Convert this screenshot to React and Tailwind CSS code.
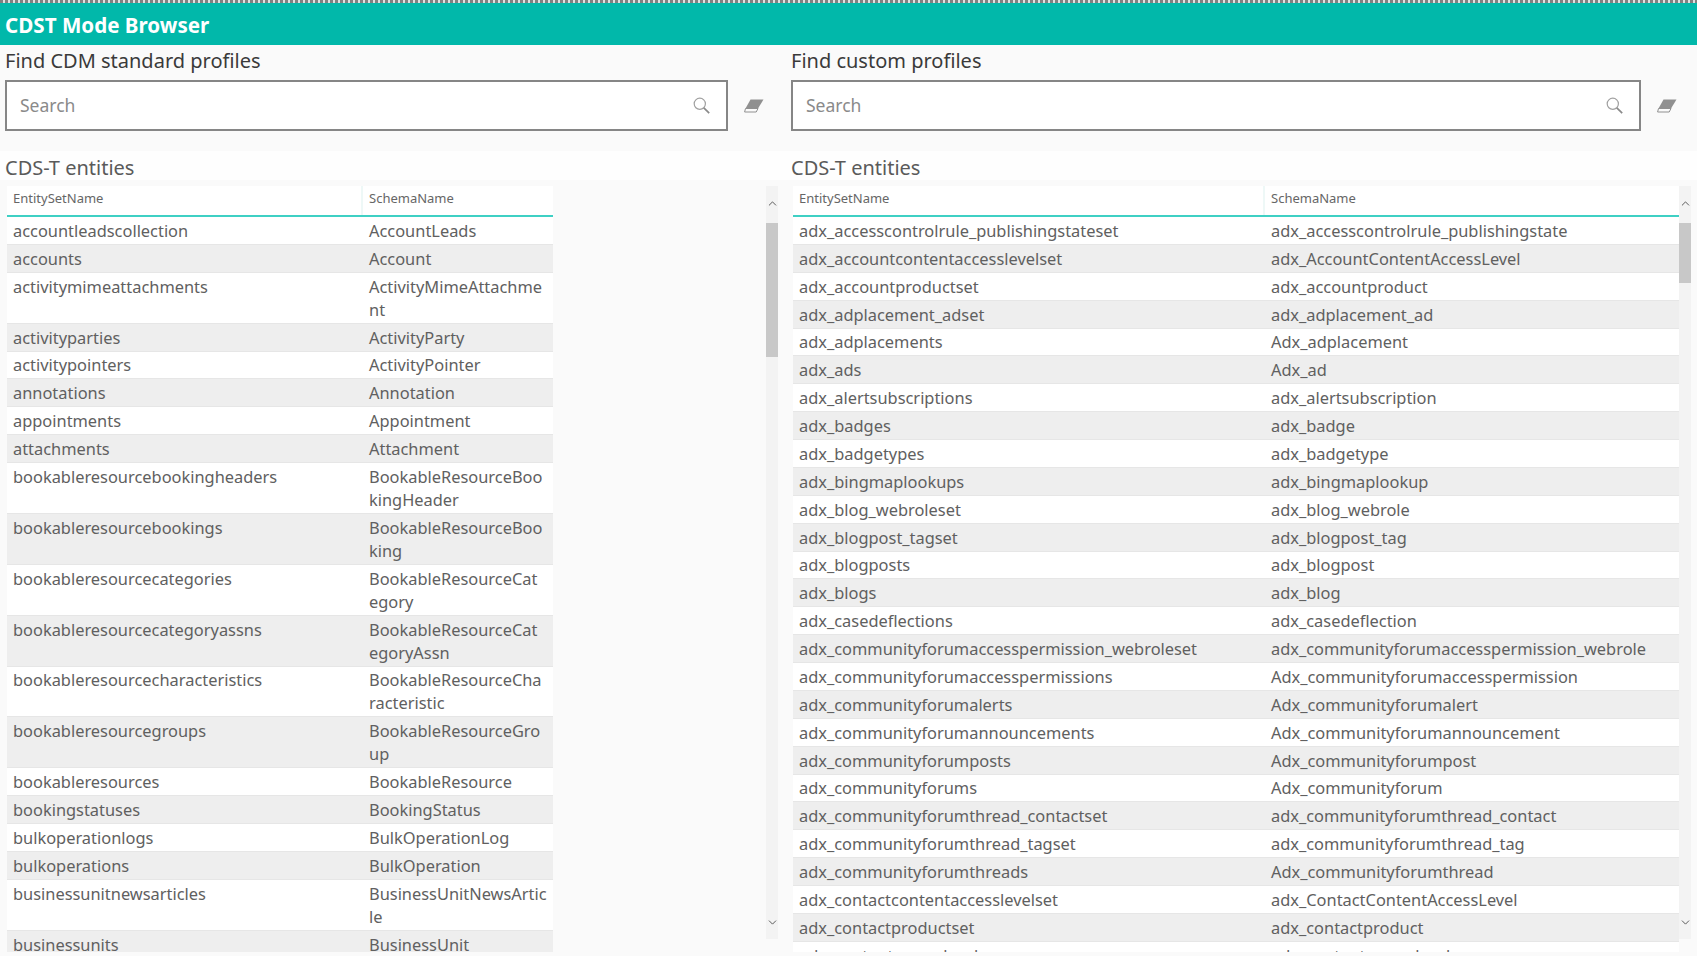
import React from "react";
import { ChevronUp, ChevronDown } from "lucide-react";

const leftRows = [
  ["accountleadscollection", "AccountLeads"],
  ["accounts", "Account"],
  ["activitymimeattachments", "ActivityMimeAttachme\nnt"],
  ["activityparties", "ActivityParty"],
  ["activitypointers", "ActivityPointer"],
  ["annotations", "Annotation"],
  ["appointments", "Appointment"],
  ["attachments", "Attachment"],
  ["bookableresourcebookingheaders", "BookableResourceBoo\nkingHeader"],
  ["bookableresourcebookings", "BookableResourceBoo\nking"],
  ["bookableresourcecategories", "BookableResourceCat\negory"],
  ["bookableresourcecategoryassns", "BookableResourceCat\negoryAssn"],
  ["bookableresourcecharacteristics", "BookableResourceCha\nracteristic"],
  ["bookableresourcegroups", "BookableResourceGro\nup"],
  ["bookableresources", "BookableResource"],
  ["bookingstatuses", "BookingStatus"],
  ["bulkoperationlogs", "BulkOperationLog"],
  ["bulkoperations", "BulkOperation"],
  ["businessunitnewsarticles", "BusinessUnitNewsArtic\nle"],
  ["businessunits", "BusinessUnit"],
];

const rightRows = [
  ["adx_accesscontrolrule_publishingstateset", "adx_accesscontrolrule_publishingstate"],
  ["adx_accountcontentaccesslevelset", "adx_AccountContentAccessLevel"],
  ["adx_accountproductset", "adx_accountproduct"],
  ["adx_adplacement_adset", "adx_adplacement_ad"],
  ["adx_adplacements", "Adx_adplacement"],
  ["adx_ads", "Adx_ad"],
  ["adx_alertsubscriptions", "adx_alertsubscription"],
  ["adx_badges", "adx_badge"],
  ["adx_badgetypes", "adx_badgetype"],
  ["adx_bingmaplookups", "adx_bingmaplookup"],
  ["adx_blog_webroleset", "adx_blog_webrole"],
  ["adx_blogpost_tagset", "adx_blogpost_tag"],
  ["adx_blogposts", "adx_blogpost"],
  ["adx_blogs", "adx_blog"],
  ["adx_casedeflections", "adx_casedeflection"],
  ["adx_communityforumaccesspermission_webroleset", "adx_communityforumaccesspermission_webrole"],
  ["adx_communityforumaccesspermissions", "Adx_communityforumaccesspermission"],
  ["adx_communityforumalerts", "Adx_communityforumalert"],
  ["adx_communityforumannouncements", "Adx_communityforumannouncement"],
  ["adx_communityforumposts", "Adx_communityforumpost"],
  ["adx_communityforums", "Adx_communityforum"],
  ["adx_communityforumthread_contactset", "adx_communityforumthread_contact"],
  ["adx_communityforumthread_tagset", "adx_communityforumthread_tag"],
  ["adx_communityforumthreads", "Adx_communityforumthread"],
  ["adx_contactcontentaccesslevelset", "adx_ContactContentAccessLevel"],
  ["adx_contactproductset", "adx_contactproduct"],
  ["adx_contentaccesslevels", "adx_contentaccesslevel"],
];

const Eraser = () => (
  <svg width="20" height="14" viewBox="0 0 20 14" className="text-[#909090]">
    <path d="M6.5 .5h13l-5.5 9H1.5z" fill="currentColor" />
    <path d="M1.5 9.5h12.5l-1.8 3.5H.6z" fill="#fafafa" stroke="currentColor" strokeWidth="1" />
  </svg>
);

const SearchGlyph = () => (
  <svg width="17" height="17" viewBox="0 0 17 17" fill="none" stroke="#a0a0a0" className="shrink-0">
    <circle cx="6.8" cy="6.8" r="5.6" strokeWidth="1.2" />
    <path d="M10.8 10.8l5.4 5.4" strokeWidth="1.7" stroke="#8a8a8a" />
  </svg>
);

const SearchBox = ({ width }) => (
  <div className={`${width} h-[51px] flex items-center justify-between border-2 border-[#868686] bg-white pl-[13px] pr-[16px]`}>
    <span className="text-[17.5px] text-[#8a8a8a]">Search</span>
    <SearchGlyph />
  </div>
);

const Scrollbar = ({ thumb }) => (
  <div className="w-[12px] h-[753px] bg-[#f3f3f3] flex flex-col items-center">
    <ChevronUp size={13} strokeWidth={1.6} className="mt-[11px] mb-[13px] text-[#444] shrink-0" />
    <div className={`${thumb} w-full bg-[#c8c8c8]`} />
    <div className="flex-1" />
    <ChevronDown size={13} strokeWidth={1.6} className="mb-[10px] text-[#444] shrink-0" />
  </div>
);

const Table = ({ rows, colA, colB, width }) => (
  <div className={`${width} h-[766px] overflow-hidden`}>
    <div className="flex h-[31px] border-b-2 border-[#3fd0c4] bg-white text-[13px] text-[#666]">
      <div className={`${colA} pl-[6px] pt-[3px] border-r-2 border-[#eef8f7]`}>EntitySetName</div>
      <div className={`${colB} pl-[6px] pt-[3px]`}>SchemaName</div>
    </div>
    {rows.map(([a, b], i) => (
      <div
        key={a}
        className={`flex text-[16.4px] leading-[23px] text-[#606060] border-b border-[#e6e6e6] py-[1.95px] ${i % 2 ? "bg-[#eeeeee]" : "bg-white"}`}
      >
        <div className={`${colA} pl-[6px] whitespace-pre-line`}>{a}</div>
        <div className={`${colB} pl-[6px] whitespace-pre-line`}>{b}</div>
      </div>
    ))}
  </div>
);

export default function App() {
  return (
    <div className="h-[956px] overflow-hidden bg-[#fafafa] font-['Noto_Sans',sans-serif]">
      <div className="h-[3px] bg-[repeating-linear-gradient(90deg,#808080_0,#808080_3px,#e0e0e0_3px,#e0e0e0_5px)]" />
      <div className="h-[42px] flex items-center bg-[#01b8aa] pl-[5px] pt-[2px] text-[20.6px] font-bold text-white">CDST Mode Browser</div>
      <div className="flex">
        <div className="w-[786px] pl-[5px] shrink-0">
          <div className="h-[35px] pt-[1px] text-[20px] text-[#3a3a3a]">Find CDM standard profiles</div>
          <div className="flex items-center">
            <SearchBox width="w-[723px]" />
            <div className="ml-[16px]"><Eraser /></div>
          </div>
        </div>
        <div className="flex-1 pl-[5px]">
          <div className="h-[35px] pt-[1px] text-[20px] text-[#3a3a3a]">Find custom profiles</div>
          <div className="flex items-center">
            <SearchBox width="w-[850px]" />
            <div className="ml-[16px]"><Eraser /></div>
          </div>
        </div>
      </div>
      <div className="h-[20px]" />
      <div className="flex">
        <div className="w-[786px] shrink-0">
          <div className="h-[29px] mb-[6px] bg-[#fefefe] pl-[5px] pt-[2px] text-[20px] text-[#5a5a5a]">CDS-T entities</div>
          <div className="flex pl-[7px]">
            <Table rows={leftRows} colA="w-[356px]" colB="w-[190px]" width="w-[546px]" />
            <div className="ml-[213px]"><Scrollbar thumb="h-[134px]" /></div>
          </div>
        </div>
        <div className="flex-1">
          <div className="h-[29px] mb-[6px] bg-[#fefefe] pl-[5px] pt-[2px] text-[20px] text-[#5a5a5a]">CDS-T entities</div>
          <div className="flex pl-[7px]">
            <Table rows={rightRows} colA="w-[472px]" colB="w-[414px]" width="w-[886px]" />
            <Scrollbar thumb="h-[60px]" />
          </div>
        </div>
      </div>
    </div>
  );
}
